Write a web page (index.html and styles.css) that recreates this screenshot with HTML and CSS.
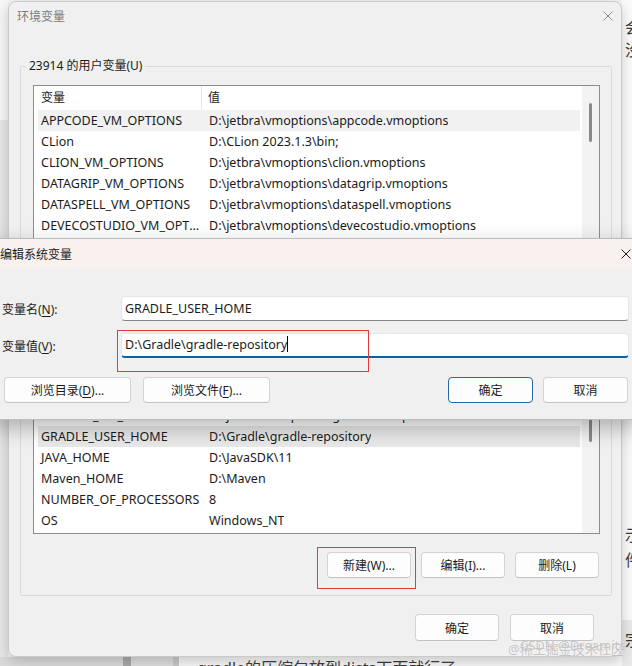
FILE: index.html
```html
<!DOCTYPE html>
<html lang="zh-CN">
<head>
<meta charset="utf-8">
<title>环境变量</title>
<link rel="stylesheet" href="styles.css">
</head>
<body>
<div class="screen">
  <div class="gutter"></div>

  <div class="envwin">
    <div class="titlebar">
      <span class="title">环境变量</span>
      <svg class="close" viewBox="0 0 10 10" width="10" height="10"><path d="M0.5 0.5 L9.5 9.5 M9.5 0.5 L0.5 9.5"/></svg>
    </div>

    <div class="group g1">
      <div class="legend">23914 的用户变量(U)</div>
      <div class="list l1">
        <div class="list-main">
          <div class="list-head"><div class="hc c1">变量</div><div class="hc c2">值</div></div>
          <div class="row sel"><div class="cell c1">APPCODE_VM_OPTIONS</div><div class="cell c2">D:\jetbra\vmoptions\appcode.vmoptions</div></div>
          <div class="row"><div class="cell c1">CLion</div><div class="cell c2">D:\CLion 2023.1.3\bin;</div></div>
          <div class="row"><div class="cell c1">CLION_VM_OPTIONS</div><div class="cell c2">D:\jetbra\vmoptions\clion.vmoptions</div></div>
          <div class="row"><div class="cell c1">DATAGRIP_VM_OPTIONS</div><div class="cell c2">D:\jetbra\vmoptions\datagrip.vmoptions</div></div>
          <div class="row"><div class="cell c1">DATASPELL_VM_OPTIONS</div><div class="cell c2">D:\jetbra\vmoptions\dataspell.vmoptions</div></div>
          <div class="row"><div class="cell c1">DEVECOSTUDIO_VM_OPTIONS</div><div class="cell c2">D:\jetbra\vmoptions\devecostudio.vmoptions</div></div>
          <div class="row"><div class="cell c1">GATEWAY_VM_OPTIONS</div><div class="cell c2">D:\jetbra\vmoptions\gateway.vmoptions</div></div>
        </div>
        <div class="vscroll"><div class="thumb t1"></div></div>
      </div>
      <div class="btnrow b1">
        <div class="btn">新建(N)...</div>
        <div class="btn">编辑(E)...</div>
        <div class="btn">删除(D)</div>
      </div>
    </div>

    <div class="group g2">
      <div class="legend">系统变量(S)</div>
      <div class="list l2">
        <div class="list-main">
          <div class="list-head"><div class="hc c1">变量</div><div class="hc c2">值</div></div>
          <div class="row"><div class="cell c1">ComSpec</div><div class="cell c2">C:\Windows\system32\cmd.exe</div></div>
          <div class="row"><div class="cell c1">DriverData</div><div class="cell c2">C:\Windows\System32\Drivers\DriverData</div></div>
          <div class="row"><div class="cell c1">GATEWAY_VM_OPTIONS</div><div class="cell c2">D:\jetbra\vmoptions\gateway.vmoptions</div></div>
          <div class="row"><div class="cell c1">GOLAND_VM_OPTIONS</div><div class="cell c2">D:\jetbra\vmoptions\goland.vmoptions</div></div>
          <div class="row sel2"><div class="cell c1">GRADLE_USER_HOME</div><div class="cell c2">D:\Gradle\gradle-repository</div></div>
          <div class="row"><div class="cell c1">JAVA_HOME</div><div class="cell c2">D:\JavaSDK\11</div></div>
          <div class="row"><div class="cell c1">Maven_HOME</div><div class="cell c2">D:\Maven</div></div>
          <div class="row"><div class="cell c1">NUMBER_OF_PROCESSORS</div><div class="cell c2">8</div></div>
          <div class="row"><div class="cell c1">OS</div><div class="cell c2">Windows_NT</div></div>
          <div class="row"><div class="cell c1">Path</div><div class="cell c2">C:\Windows\system32;C:\Windows</div></div>
        </div>
        <div class="vscroll"><div class="thumb t2"></div></div>
      </div>
      <div class="btnrow b2">
        <div class="btn">新建(W)...</div>
        <div class="btn">编辑(I)...</div>
        <div class="btn">删除(L)</div>
      </div>
    </div>

    <div class="footer">
      <div class="btn wide">确定</div>
      <div class="btn wide">取消</div>
    </div>
  </div>

  <div class="side">
    <div class="ch ch1">会</div>
    <div class="ch ch2">没</div>
    <div class="ch ch3">示</div>
    <div class="ch ch4">件</div>
    <div class="ch ch5">宗</div>
  </div>

  <div class="article">gradle的压缩包放到dists下面就行了</div>

  <div class="editwin">
    <div class="etitlebar">
      <span class="etitle">编辑系统变量</span>
      <svg class="eclose" viewBox="0 0 10 10" width="10" height="10"><path d="M0.5 0.5 L9.5 9.5 M9.5 0.5 L0.5 9.5"/></svg>
    </div>
    <div class="ebody">
      <div class="form">
        <div class="flabel">变量名(<u>N</u>):</div>
        <div class="field">GRADLE_USER_HOME</div>
        <div class="flabel">变量值(<u>V</u>):</div>
        <div class="field focus">D:\Gradle\gradle-repository<span class="caret"></span></div>
      </div>
      <div class="ebtns">
        <div class="btn browse">浏览目录(<u>D</u>)...</div>
        <div class="btn browse">浏览文件(<u>F</u>)...</div>
        <div class="spacer"></div>
        <div class="btn ok">确定</div>
        <div class="btn cancel">取消</div>
      </div>
    </div>
  </div>

  <div class="mark m1"></div>
  <div class="mark m2"></div>

  <div class="wm wm1">@稀土掘金技术社区</div>
  <div class="wm wm2">CSDN @Dreamits</div>
</div>
</body>
</html>
```

FILE: styles.css
```css
* { box-sizing: border-box; }
html, body { margin: 0; padding: 0; }
body {
  width: 632px;
  height: 666px;
  overflow: hidden;
  font-family: "Noto Sans", "Noto Sans CJK SC", sans-serif;
  font-size: 12.5px;
  color: #1b1b1b;
  background: #f4f4f4;
}
u { text-decoration: underline; text-underline-offset: 2px; }

.screen {
  position: relative;
  width: 632px;
  height: 666px;
  overflow: hidden;
  display: grid;
  grid-template-columns: 8px 614px 10px;
  grid-template-rows: 657px 9px;
}

.gutter {
  grid-column: 1;
  grid-row: 1;
  background: linear-gradient(#f7f7f7 0 120px, #e7e7e7 120px);
}

/* ---------- outer window ---------- */
.envwin {
  grid-column: 2;
  grid-row: 1;
  margin-top: 1px;
  height: 656px;
  border: 1px solid #cacaca;
  border-radius: 8px;
  background: #f0f0f0;
  box-shadow: 0 4px 14px rgba(0, 0, 0, 0.2);
  display: flex;
  flex-direction: column;
  position: relative;
  z-index: 1;
}
.titlebar {
  height: 27px;
  display: flex;
  align-items: center;
  justify-content: space-between;
  padding: 0 8px 0 8px;
}
.title { font-size: 12px; color: #7d7d7d; }
.close { stroke: #8a8a8a; stroke-width: 1; fill: none; }

.group {
  margin: 0 9px 0 11px;
  border: 1px solid #dadada;
  border-radius: 2px;
  padding: 0 11px 0 12px;
  display: flex;
  flex-direction: column;
}
.g1 { margin-top: 37px; padding-bottom: 8px; }
.g2 { margin-top: 10px; padding-bottom: 17px; }
.legend {
  align-self: flex-start;
  margin: -10px 0 0 -7px;
  padding: 0 3px;
  height: 18px;
  line-height: 18px;
  background: #f0f0f0;
  font-size: 12px;
  color: #1b1b1b;
}

.list {
  margin-top: 10px;
  border: 1px solid #8d8d8d;
  background: #fff;
  display: flex;
  overflow: hidden;
}
.l1 { height: 160px; }
.l2 { height: 217px; }
.list-main { flex: 1; min-width: 0; }
.list-head { height: 24px; display: flex; line-height: 24px; font-size: 12px; }
.hc.c1 { width: 168px; padding-left: 7px; border-right: 1px solid #e6e6e6; }
.hc.c2 { padding-left: 6px; }
.row {
  height: 21px;
  line-height: 21px;
  margin: 0 2px 0 4px;
  display: flex;
  white-space: nowrap;
}
.row.sel { background: #f1f1f1; }
.row.sel2 { background: #e9e9e9; }
.cell.c1 {
  width: 168px;
  flex: none;
  padding: 0 5px 0 3px;
  overflow: hidden;
  text-overflow: ellipsis;
}
.cell.c2 { padding-left: 3px; overflow: hidden; }

.vscroll { width: 17px; flex: none; background: #f3f3f3; }
.thumb { width: 3px; margin-left: 7px; background: #8a8a8a; border-radius: 2px; }
.t1 { margin-top: 17px; height: 39px; }
.t2 { margin-top: 100px; height: 24px; }

.btnrow {
  display: flex;
  justify-content: flex-end;
  gap: 10px;
  padding-right: 1px;
}
.b1 { margin-top: 8px; }
.b2 { margin-top: 18px; }

.btn {
  width: 84px;
  height: 26px;
  border: 1px solid #d3d3d3;
  border-bottom-color: #c2c2c2;
  border-radius: 4px;
  background: #fdfdfd;
  display: flex;
  align-items: center;
  justify-content: center;
  font-size: 12px;
  color: #1b1b1b;
  white-space: nowrap;
}

.footer {
  margin-top: 18px;
  display: flex;
  justify-content: flex-end;
  gap: 11px;
  padding-right: 27px;
}
.btn.wide { height: 27px; }

/* ---------- background page ---------- */
.side {
  grid-column: 3;
  grid-row: 1 / 3;
  background: linear-gradient(#fbfbfb 0 620px, #e9e9e9 620px);
  padding-left: 3px;
  font-size: 16px;
  color: #3a3a3a;
  overflow: hidden;
  white-space: nowrap;
}
.ch { height: 22px; line-height: 22px; }
.ch1 { margin-top: 16px; }
.ch2 { margin-top: 1px; }
.ch3 { margin-top: 463px; }
.ch4 { margin-top: 3px; }
.ch5 { margin-top: 58px; }

.article {
  grid-column: 1 / 3;
  grid-row: 2;
  background: linear-gradient(to right, #dadada 0 123px, #a9a9a9 123px 131px, #dedede 131px 173px, #c9c9c9 173px 179px, #f7f7f7 179px);
  padding-left: 197px;
  font-size: 16px;
  line-height: 22px;
  color: #3d3d3d;
  white-space: nowrap;
}

/* ---------- edit dialog (overlay window) ---------- */
.editwin {
  position: absolute;
  left: -8px;
  top: 238px;
  width: 648px;
  height: 182px;
  border: 1px solid #bdbdbd;
  border-radius: 8px;
  background: #f0f0f0;
  box-shadow: 0 8px 22px rgba(0, 0, 0, 0.28);
  z-index: 3;
  overflow: hidden;
}
.etitlebar {
  height: 29px;
  background: #f8f1ee;
  display: flex;
  align-items: center;
  justify-content: space-between;
  padding: 0 8px 0 7px;
}
.etitle { font-size: 12px; color: #1b1b1b; }
.eclose { stroke: #1f1f1f; stroke-width: 1; fill: none; }

.ebody { padding: 28px 10px 0 9px; }
.form {
  display: grid;
  grid-template-columns: 119px 1fr;
  row-gap: 12px;
  align-items: center;
}
.flabel { font-size: 12px; }
.field {
  height: 25px;
  background: #fff;
  border: 1px solid #e7e7e7;
  border-bottom: 1px solid #878787;
  border-radius: 4px;
  padding-left: 3px;
  line-height: 23px;
  white-space: nowrap;
}
.field.focus {
  border-bottom: 2px solid #0063ad;
  line-height: 22px;
}
.caret {
  display: inline-block;
  width: 1px;
  height: 16px;
  background: #000;
  vertical-align: -3px;
}

.ebtns {
  margin: 19px 0 0 2px;
  display: flex;
  gap: 12px;
}
.spacer { flex: 1; }
.btn.browse { width: 127px; }
.btn.ok { width: 85px; border-color: #2a67a3; margin-right: -2px; }
.btn.cancel { width: 85px; margin-right: 1px; }

/* ---------- annotations ---------- */
.mark {
  position: absolute;
  border: 1px solid #e0393e;
  z-index: 4;
}
.m1 { left: 117px; top: 330px; width: 252px; height: 42px; }
.m2 { left: 317px; top: 547px; width: 99px; height: 42px; }

.wm {
  position: absolute;
  z-index: 5;
  font-size: 13px;
  white-space: nowrap;
  color: rgba(170, 170, 170, 0.7);
  text-shadow: 0 0 1px rgba(255, 255, 255, 0.9);
}
.wm1 { left: 508px; top: 639px; }
.wm2 { left: 520px; top: 636px; color: rgba(150, 150, 150, 0.55); }
```
